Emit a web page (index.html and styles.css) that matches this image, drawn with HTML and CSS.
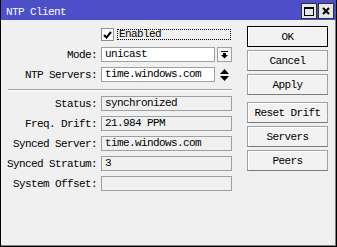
FILE: index.html
```html
<!DOCTYPE html>
<html lang="en">
<head>
    <meta charset="UTF-8">
    <title>NTP Client</title>
    <link rel="stylesheet" href="styles.css">
</head>
<body>
    <div class="window">
        <div class="titlebar">
            <span class="title">NTP Client</span>
            <div class="title-buttons">
                <span class="tbtn">
                    <svg width="10" height="9" viewBox="0 0 10 9"><rect x="0.5" y="0.5" width="9" height="8" fill="none" stroke="#000"/><rect x="0" y="0" width="10" height="2" fill="#000"/></svg>
                </span>
                <span class="tbtn">
                    <svg width="8" height="8" viewBox="0 0 8 8"><path d="M1 1L7 7M7 1L1 7" stroke="#000" stroke-width="2"/></svg>
                </span>
            </div>
        </div>

        <div class="content">
            <div class="form">
                <div class="row">
                    <span class="label"></span>
                    <div class="field">
                        <span class="checkbox">
                            <svg width="9" height="8" viewBox="0 0 9 8"><path d="M1 4L3.5 6.5L8 1" fill="none" stroke="#000" stroke-width="2"/></svg>
                        </span>
                        <span class="check-text">Enabled</span>
                    </div>
                </div>
                <div class="row">
                    <span class="label">Mode:</span>
                    <div class="field">
                        <span class="input">unicast</span>
                        <span class="drop-btn">
                            <svg width="7" height="8" viewBox="0 0 7 8"><rect x="0" y="0" width="7" height="1" fill="#000"/><rect x="2" y="2" width="3" height="2" fill="#000"/><path d="M0 4H7L3.5 7.5Z" fill="#000"/></svg>
                        </span>
                    </div>
                </div>
                <div class="row">
                    <span class="label">NTP Servers:</span>
                    <div class="field">
                        <span class="input">time.windows.com</span>
                        <span class="spinner">
                            <svg width="9" height="12" viewBox="0 0 9 12"><path d="M4.5 0L9 5H0Z M0 7H9L4.5 12Z" fill="#000"/></svg>
                        </span>
                    </div>
                </div>

                <div class="separator"></div>

                <div class="row">
                    <span class="label">Status:</span>
                    <div class="field"><span class="input readonly">synchronized</span></div>
                </div>
                <div class="row">
                    <span class="label">Freq. Drift:</span>
                    <div class="field"><span class="input readonly">21.984 PPM</span></div>
                </div>
                <div class="row">
                    <span class="label">Synced Server:</span>
                    <div class="field"><span class="input readonly">time.windows.com</span></div>
                </div>
                <div class="row">
                    <span class="label">Synced Stratum:</span>
                    <div class="field"><span class="input readonly">3</span></div>
                </div>
                <div class="row">
                    <span class="label">System Offset:</span>
                    <div class="field"><span class="input readonly"></span></div>
                </div>
            </div>

            <div class="buttons">
                <button class="btn default">OK</button>
                <button class="btn">Cancel</button>
                <button class="btn">Apply</button>
                <button class="btn spaced">Reset Drift</button>
                <button class="btn">Servers</button>
                <button class="btn">Peers</button>
            </div>
        </div>
    </div>
</body>
</html>
```

FILE: styles.css
```css
* {
    margin: 0;
    padding: 0;
    box-sizing: border-box;
}

body {
    font-family: 'Liberation Mono', 'DejaVu Sans Mono', monospace;
    font-size: 11px;
    letter-spacing: -0.6px;
    color: #000;
    background: #f0f0f0;
}

.window {
    width: 337px;
    height: 247px;
    background: #f0f0f0;
    border: 1px solid #000;
    border-top: none;
    box-shadow: inset -1px -1px 0 #808080;
    display: flex;
    flex-direction: column;
}

.titlebar {
    height: 20px;
    background: #4c4fc8;
    display: flex;
    justify-content: space-between;
    align-items: flex-start;
    padding: 0 2px 0 5px;
}

.title {
    color: #fff;
    line-height: 24px;
}

.title-buttons {
    display: flex;
    gap: 1px;
    padding-top: 3px;
}

.tbtn {
    width: 16px;
    height: 16px;
    border: 1px solid #303030;
    background: #e6e6e6;
    display: flex;
    align-items: center;
    justify-content: center;
}

.content {
    flex: 1;
    display: flex;
    padding: 7px 0 0 6px;
}

.form {
    width: 225px;
    display: flex;
    flex-direction: column;
    gap: 5px;
}

.row {
    display: flex;
    height: 15px;
    align-items: center;
}

.label {
    width: 90px;
    margin-right: 4px;
    text-align: right;
    white-space: nowrap;
}

.field {
    width: 131px;
    height: 15px;
    display: flex;
    align-items: center;
    gap: 2px;
}

.checkbox {
    width: 13px;
    height: 13px;
    border: 1px solid #8f8f8f;
    background: #fff;
    display: flex;
    align-items: center;
    justify-content: center;
}

.check-text {
    flex: 1;
    height: 11px;
    margin-left: 1px;
    margin-right: 1px;
    border: 1px dotted #000;
    line-height: 9px;
    padding-left: 1px;
}

.input {
    flex: 1;
    height: 15px;
    border: 1px solid #a0a0a0;
    background: #fff;
    line-height: 13px;
    padding-left: 3px;
    white-space: nowrap;
}

.input.readonly {
    background: #f0f0f0;
}

.drop-btn {
    width: 15px;
    height: 15px;
    border: 1px solid #a0a0a0;
    background: #f4f4f4;
    display: flex;
    align-items: center;
    justify-content: center;
}

.spinner {
    width: 15px;
    height: 15px;
    display: flex;
    align-items: center;
    justify-content: center;
}

.separator {
    height: 4px;
    margin-left: 1px;
    padding-top: 2px;
}

.separator::after {
    content: '';
    display: block;
    border-top: 1px solid #a0a0a0;
    border-bottom: 1px solid #fff;
}

.buttons {
    margin-left: 15px;
    margin-top: -1px;
    display: flex;
    flex-direction: column;
    gap: 3px;
}

.btn {
    width: 81px;
    height: 21px;
    font-family: inherit;
    font-size: 11px;
    letter-spacing: -0.6px;
    color: #000;
    background: #f2f2f2;
    border: 1px solid #a0a0a0;
    border-bottom-color: #7a7a7a;
    box-shadow: inset 1px 1px 0 #fff;
}

.btn.default {
    border: 1px solid #000;
}

.btn.spaced {
    margin-top: 4px;
}
```
